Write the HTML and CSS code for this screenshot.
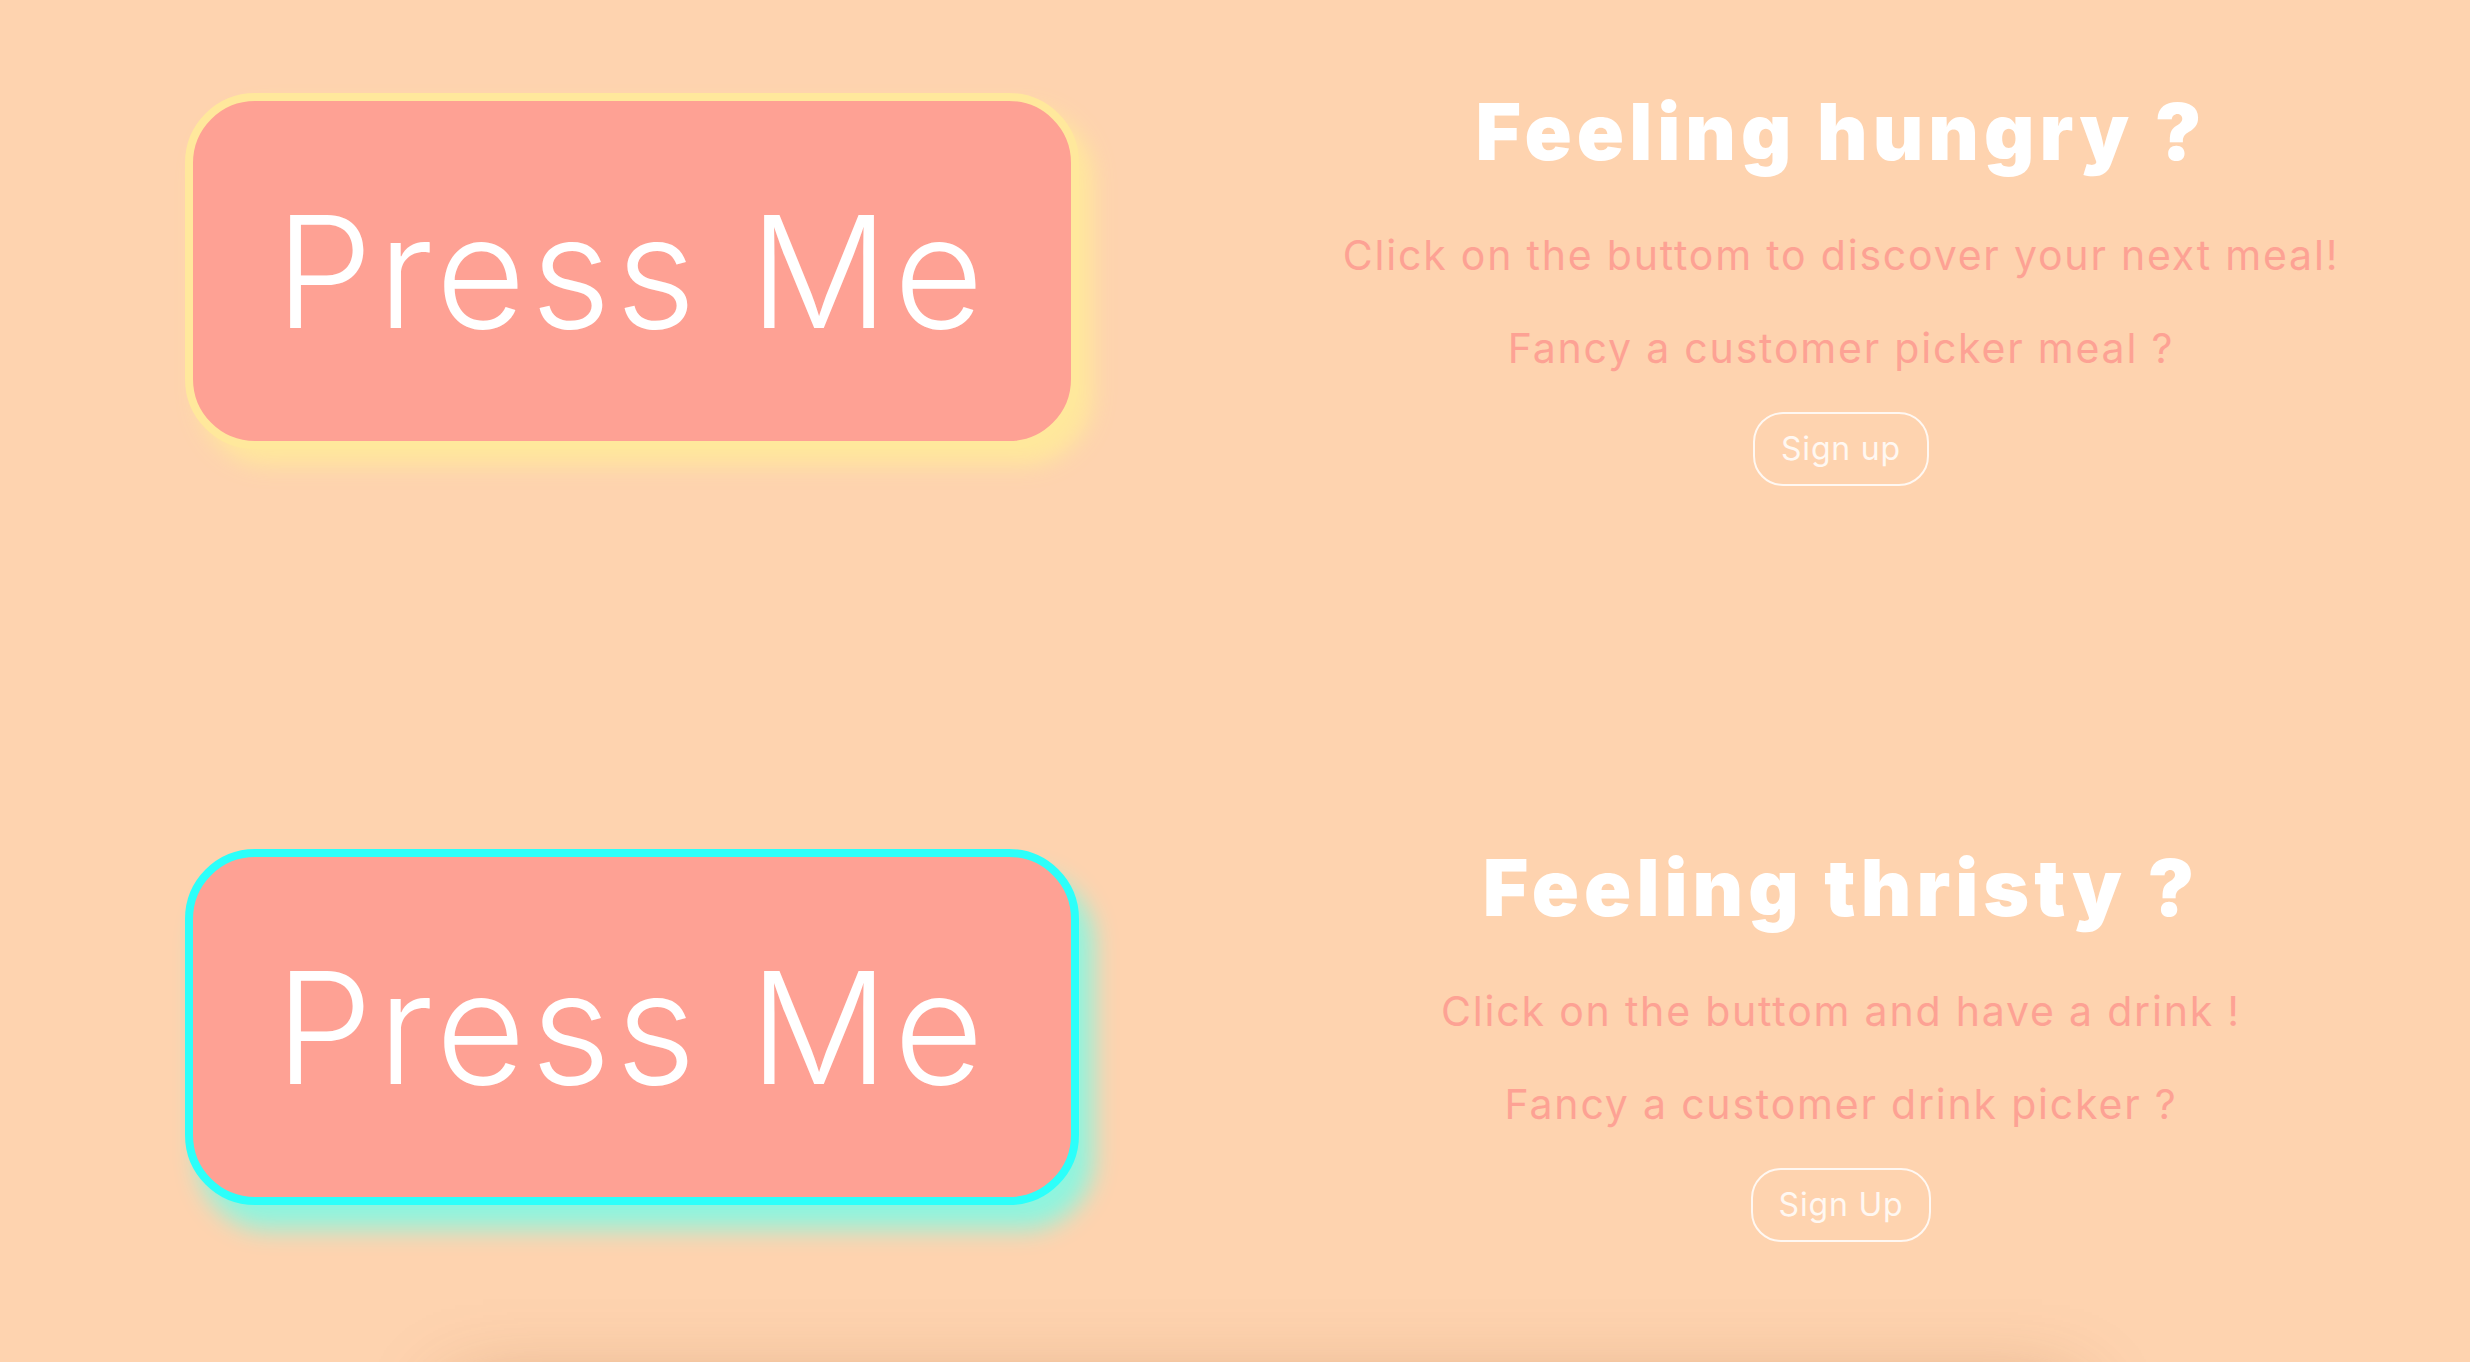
FILE: index.html
```html
<!DOCTYPE html>
<html lang="en">
<head>
<meta charset="utf-8">
<title>Meal &amp; Drink Picker</title>
<link rel="stylesheet" href="styles.css">
</head>
<body>
  <section class="section">
    <div class="left">
      <button class="press press--meal">Press Me</button>
    </div>
    <div class="info">
      <h1 class="title">Feeling hungry ?</h1>
      <p class="lead">Click on the buttom to discover your next meal!</p>
      <p class="lead lead--second">Fancy a customer picker meal ?</p>
      <a class="signup" href="#">Sign up</a>
    </div>
  </section>
  <section class="section section--last">
    <div class="left">
      <button class="press press--drink">Press Me</button>
    </div>
    <div class="info">
      <h1 class="title">Feeling thristy ?</h1>
      <p class="lead">Click on the buttom and have a drink !</p>
      <p class="lead lead--second">Fancy a customer drink picker ?</p>
      <a class="signup" href="#">Sign Up</a>
    </div>
  </section>
  <div class="footer-card"></div>
</body>
</html>
```

FILE: styles.css
```css
html, body {
  margin: 0;
  padding: 0;
}

body {
  background: #fed3af;
  font-family: Inter, "Liberation Sans", sans-serif;
  overflow: hidden;
}

.section {
  display: grid;
  grid-template-columns: 1212px 1fr;
  align-items: start;
  box-sizing: border-box;
  height: 756px;
  padding-top: 93px;
}

.section--last {
  height: 640px;
}

.left {
  padding-left: 185px;
}

.press {
  display: flex;
  align-items: center;
  justify-content: center;
  box-sizing: border-box;
  width: 894px;
  height: 356px;
  padding: 0;
  margin: 0;
  border-radius: 70px;
  background: #fea194;
  color: #ffffff;
  font-family: Inter, "Liberation Sans", sans-serif;
  font-weight: 300;
  font-size: 155px;
  letter-spacing: 5px;
  line-height: 1;
  cursor: pointer;
}

.press--meal {
  border: 8px solid #ffe89c;
  box-shadow: 14px 16px 22px #ffe89c;
}

.press--drink {
  border: 8px solid #2cfffa;
  box-shadow: 14px 24px 24px #8ef5df;
}

.info {
  display: flex;
  flex-direction: column;
  align-items: center;
  text-align: center;
}

.title {
  margin: 0;
  color: #ffffff;
  font-weight: 900;
  font-size: 78px;
  line-height: 78px;
  letter-spacing: 5px;
}

.lead {
  margin: 64px 0 0;
  color: #fda294;
  font-weight: 400;
  font-size: 41px;
  line-height: 41px;
  letter-spacing: 1.8px;
}

.lead--second {
  margin-top: 52px;
}

.signup {
  display: inline-flex;
  align-items: center;
  box-sizing: border-box;
  height: 74px;
  margin-top: 43px;
  padding: 0 26px;
  border: 2px solid #fff8f2;
  border-radius: 30px;
  color: #fff8f2;
  font-size: 32px;
  letter-spacing: 0.8px;
  line-height: 1;
  text-decoration: none;
}

.footer-card {
  height: 400px;
  margin: 0 400px 0 455px;
  background: #fed3af;
  box-shadow: 0 0 80px rgba(140, 70, 20, 0.4);
}
```
